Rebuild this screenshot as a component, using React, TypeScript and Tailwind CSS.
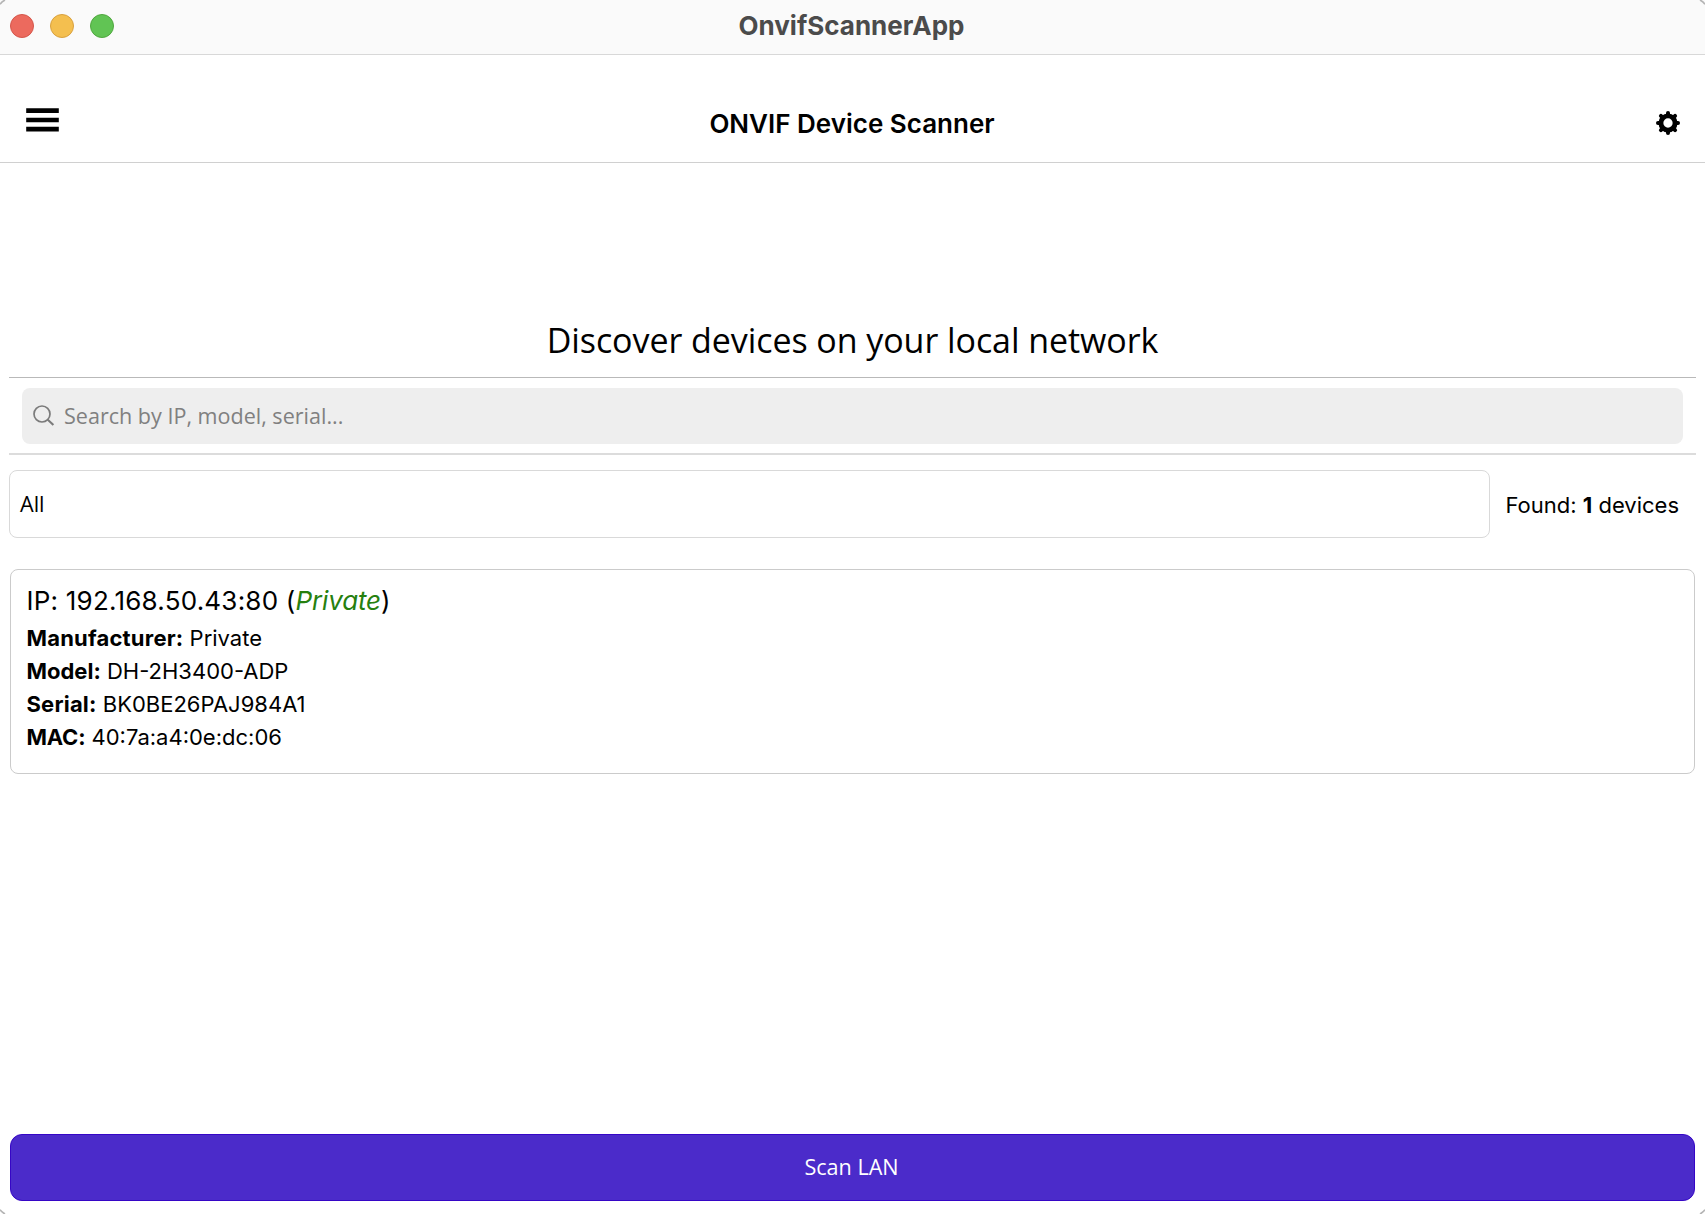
import React from 'react';

interface Device {
  address: string;
  name: string;
  manufacturer: string;
  model: string;
  serial: string;
  mac: string;
}

const devices: Device[] = [
  {
    address: '192.168.50.43:80',
    name: 'Private',
    manufacturer: 'Private',
    model: 'DH-2H3400-ADP',
    serial: 'BK0BE26PAJ984A1',
    mac: '40:7a:a4:0e:dc:06'
  }
];

const MenuIcon = () => (
  <svg width="34" height="26" viewBox="0 0 34 26" className="block">
    <path d="M.2 3.7h32.6M.2 13h32.6M.2 22.2h32.6" stroke="#000" strokeWidth="4.7" />
  </svg>
);

const GearIcon = () => (
  <svg width="26" height="26" viewBox="-13 -13 26 26" className="block">
    <g stroke="#000" strokeWidth="4" strokeLinecap="round">
      {[0, 45, 90, 135, 180, 225, 270, 315].map(angle => (
        <line key={angle} x1="0" y1="-7.5" x2="0" y2="-10" transform={`rotate(${angle})`} />
      ))}
    </g>
    <circle r="7.1" fill="none" stroke="#000" strokeWidth="4.9" />
  </svg>
);

const SearchIcon = () => (
  <svg width="22" height="22" viewBox="0 0 22 22" fill="none" stroke="#7b7b7b" className="block">
    <circle cx="9" cy="9" r="8" strokeWidth="1.7" />
    <path d="M14.8 14.8l5.6 5.3" strokeWidth="2.1" />
  </svg>
);

const TitleBar = () => (
  <div className="h-[55px] shrink-0 flex bg-[#fafafa] border-b border-[#d8d8d8]">
    <div className="w-[200px] flex gap-4 pt-3.5 pl-2.5">
      <span className="size-6 rounded-full bg-[#ec6a5e] border border-[#d5564b]" />
      <span className="size-6 rounded-full bg-[#f4bf4f] border border-[#d9a13f]" />
      <span className="size-6 rounded-full bg-[#61c454] border border-[#50a73f]" />
    </div>
    <div className="flex-1 h-[51px] pr-[2px] text-center leading-[51px] text-[26px] font-bold text-[#4b4b4b]">
      OnvifScannerApp
    </div>
    <div className="w-[200px]" />
  </div>
);

const Header = () => (
  <header className="h-[108px] shrink-0 flex justify-between items-start pt-[45px] pl-[26px] pr-6 border-b border-[#d0d0d0]">
    <div className="w-[34px] pt-[7px]">
      <MenuIcon />
    </div>
    <h1 className="pr-[3px] leading-[47px] text-[26px] font-semibold">ONVIF Device Scanner</h1>
    <div className="w-[34px] pt-[10px] flex justify-end">
      <GearIcon />
    </div>
  </header>
);

const DeviceCard = ({ device }: { device: Device }) => (
  <div className="h-[205px] mx-[1px] pt-[11px] pl-[15.5px] border border-[#cbcbcb] rounded-lg text-[22px] leading-[33px]">
    <div className="h-[41px] leading-10 text-[26px] tracking-[0.22px]">
      IP: {device.address} (
      <span className="italic text-[#26800f] tracking-[-0.15px]">{device.name}</span>)
    </div>
    <div>
      <b className="tracking-[0.2px]">Manufacturer:</b> {device.manufacturer}
    </div>
    <div>
      <b>Model:</b> {device.model}
    </div>
    <div>
      <b className="tracking-[0.2px]">Serial:</b> {device.serial}
    </div>
    <div>
      <b className="tracking-[-0.2px]">MAC:</b> {device.mac}
    </div>
  </div>
);

// Thin grey outline that shows at the rounded window corners
const Corner = ({ className }: { className: string }) => (
  <svg width="6" height="6" viewBox="0 0 6 6" className={'absolute ' + className}>
    <path d="M0 4.2Q2 1.6 5 0" fill="none" stroke="#b4b4b4" strokeWidth="1.6" />
  </svg>
);

export default function App() {
  return (
    <div className="relative w-full h-[1214px] flex flex-col overflow-hidden bg-white text-black font-['Inter',sans-serif]">
      <TitleBar />
      <Header />

      <main className="flex-1 flex flex-col pt-[152px] pb-[13px] px-[9px]">
        <h2 className="h-[62px] pt-[1px] text-center leading-[48px] text-[34px] tracking-[-0.07px] font-['Open_Sans',sans-serif]">
          Discover devices on your local network
        </h2>

        <div className="h-[78px] px-[13px] pt-[10px] border-t border-b-2 border-t-[#b9b9b9] border-b-[#dcdcdc]">
          <div className="h-[56px] flex items-center rounded-lg bg-[#eeeeee] pl-[10.5px] font-['Open_Sans',sans-serif]">
            <SearchIcon />
            <span className="pl-[9.5px] pt-[1px] text-[21.55px] text-[#808080]">Search by IP, model, serial...</span>
          </div>
        </div>

        <div className="mt-[15px] h-[68px] flex">
          <div className="w-[1481px] flex items-center pl-[10px] border border-[#d9d9d9] rounded-lg text-[21.6px] font-['Open_Sans',sans-serif]">
            All
          </div>
          <div className="flex-1 pr-[17px] text-right leading-[71px] text-[22px]">
            Found: <b>{devices.length}</b> devices
          </div>
        </div>

        <div className="mt-[31px] flex-1">
          {devices.map(device => (
            <DeviceCard key={device.mac} device={device} />
          ))}
        </div>

        <button className="h-[67px] mx-[1px] pr-[2px] border border-[#3606c6] rounded-xl bg-[#4b2bca] text-white text-[21.6px] font-['Open_Sans',sans-serif]">
          Scan LAN
        </button>
      </main>

      <Corner className="top-0 left-0" />
      <Corner className="top-0 right-0 -scale-x-100" />
      <Corner className="bottom-0 left-0 -scale-y-100" />
      <Corner className="bottom-0 right-0 -scale-100" />
    </div>
  );
}
